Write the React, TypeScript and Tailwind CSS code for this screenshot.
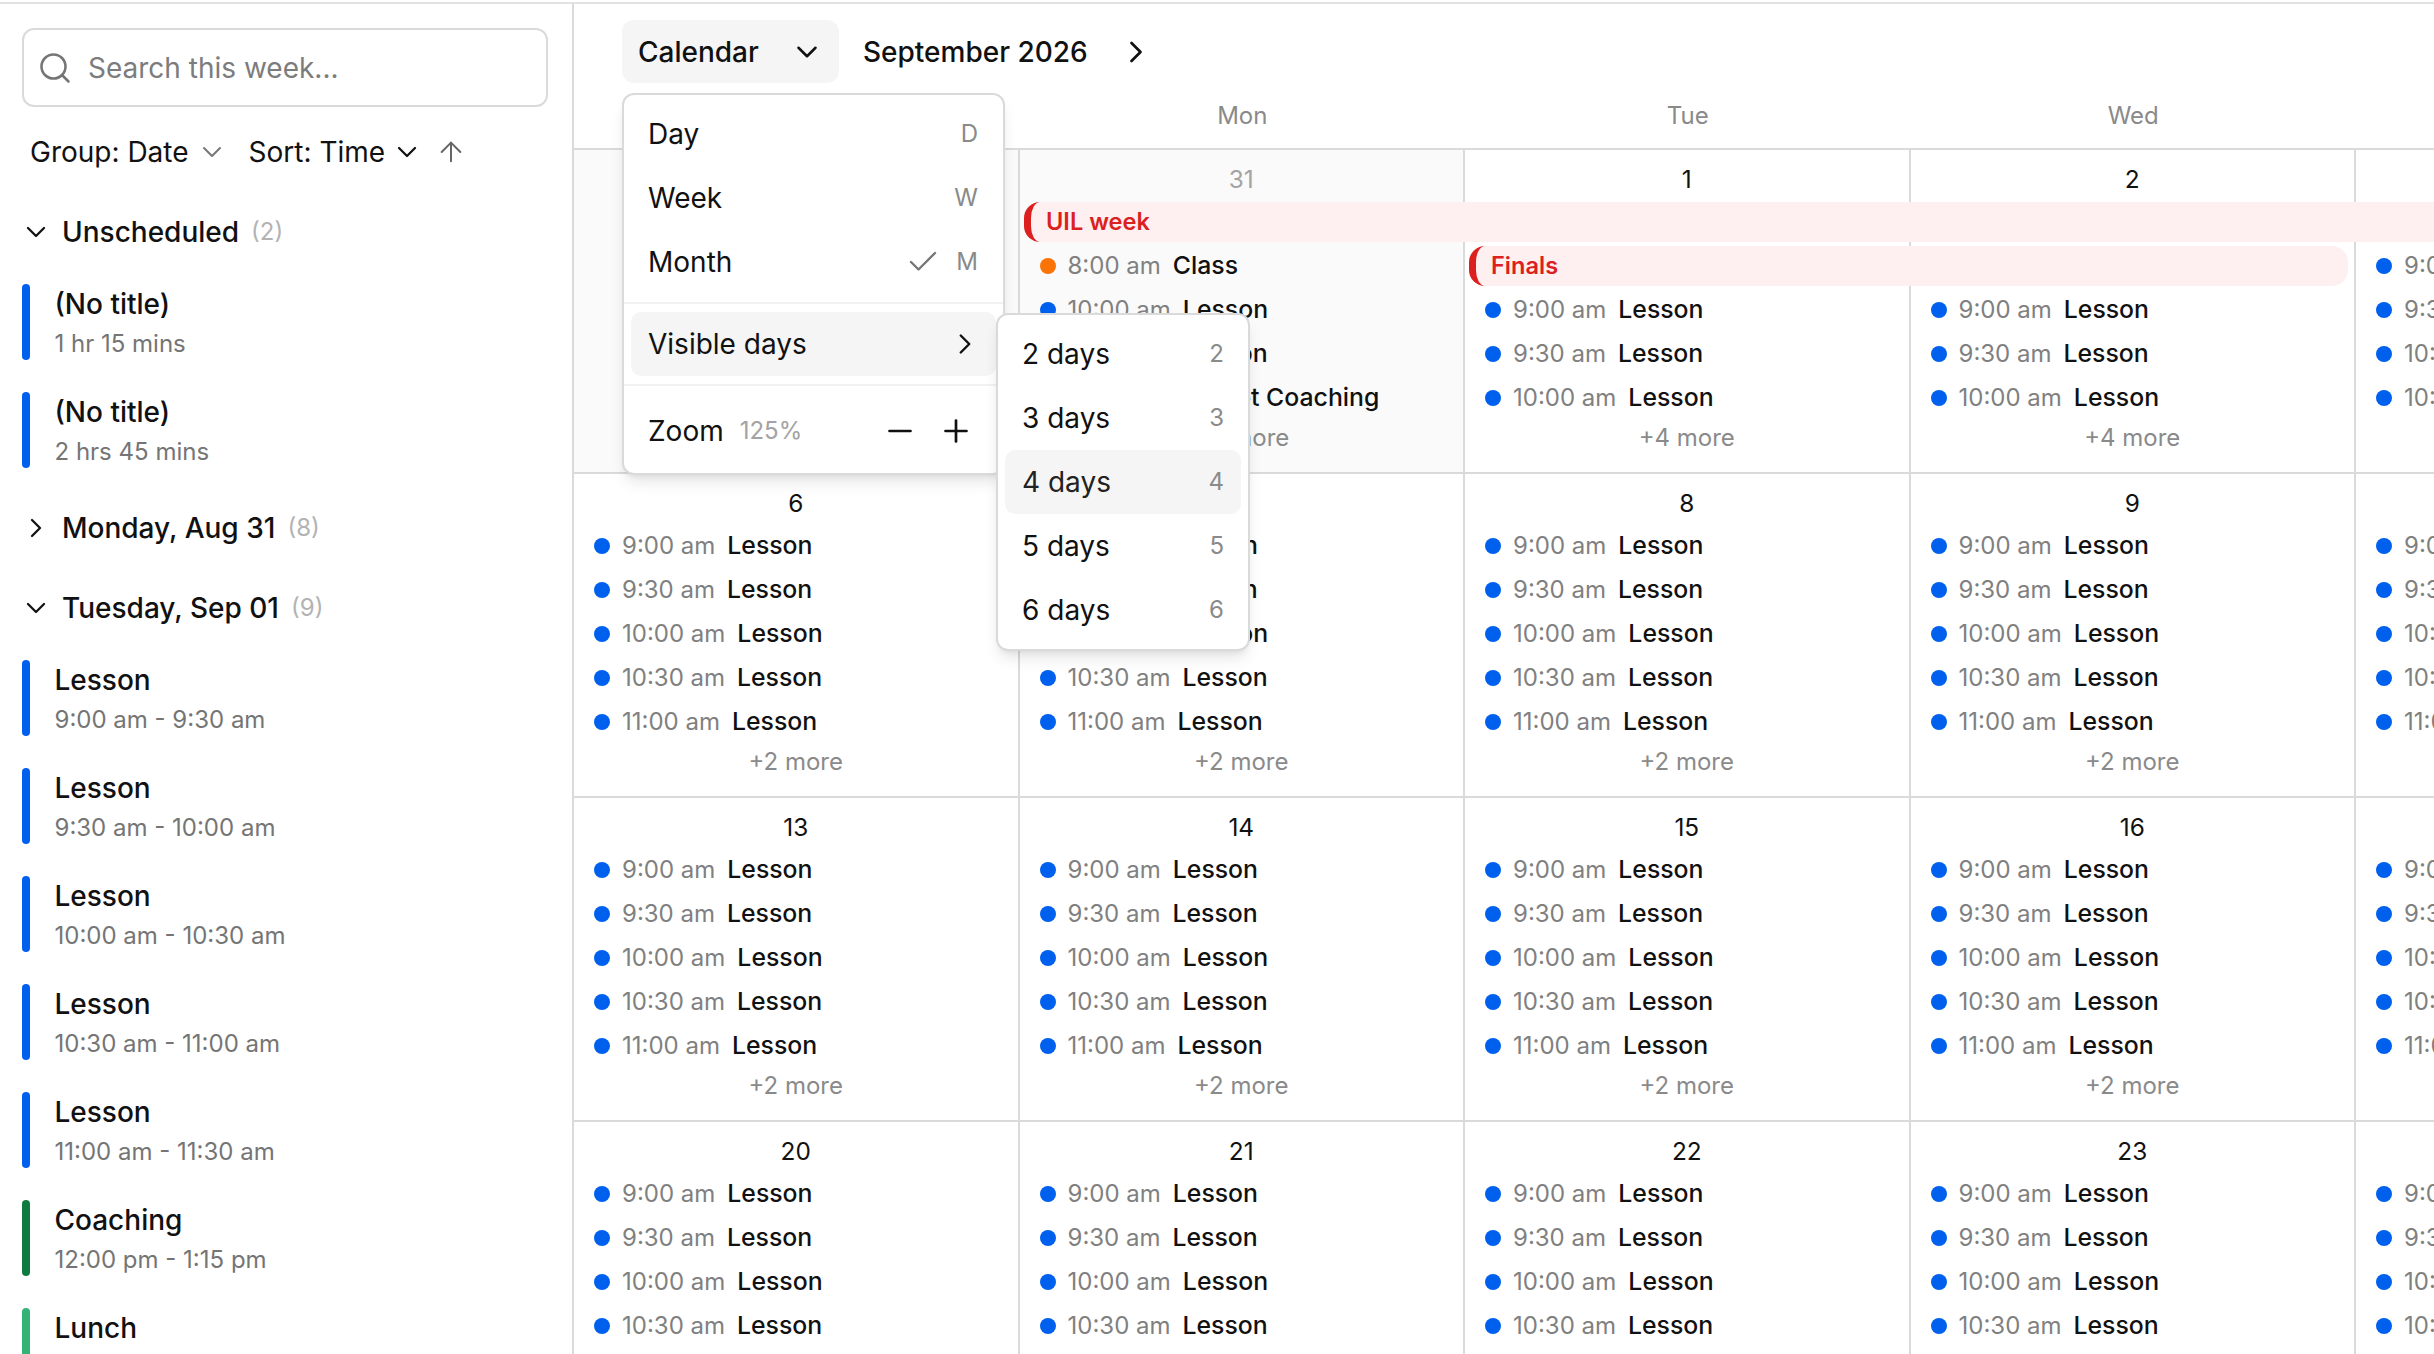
import { ArrowUp, Check, ChevronDown, ChevronRight, Minus, Plus, Search } from 'lucide-react';

type Ev = { time: string; title: string; dot?: string };
type Cell = { date: string; muted?: boolean; shaded?: boolean; top?: number; events: Ev[]; more?: number };

const lessons = (times: string[]): Ev[] => times.map((time) => ({ time, title: 'Lesson' }));
const full = ['9:00 am', '9:30 am', '10:00 am', '10:30 am', '11:00 am'];

const firstRow: Cell[] = [
  { date: '30', muted: true, shaded: true, events: [] },
  {
    date: '31',
    muted: true,
    shaded: true,
    top: 44,
    more: 4,
    events: [
      { time: '8:00 am', title: 'Class', dot: 'bg-[#f97306]' },
      { time: '10:00 am', title: 'Lesson' },
      { time: '10:30 am', title: 'Lesson' },
      { time: '12:00 pm', title: 'Target Coaching', dot: 'bg-[#0f7a3f]' },
    ],
  },
  { date: '1', top: 88, more: 4, events: lessons(['9:00 am', '9:30 am', '10:00 am']) },
  { date: '2', top: 88, more: 4, events: lessons(['9:00 am', '9:30 am', '10:00 am']) },
  { date: '3', top: 44, more: 4, events: lessons(['9:00 am', '9:30 am', '10:00 am', '10:30 am']) },
];

const week = (start: number): Cell[] =>
  [0, 1, 2, 3, 4].map((i) => ({ date: String(start + i), more: 2, events: lessons(full) }));

const rows: Cell[][] = [firstRow, week(6), week(13), week(20)];

const sidebarLessons = [
  { title: 'Lesson', sub: '9:00 am - 9:30 am', bar: 'bg-[#0060ee]' },
  { title: 'Lesson', sub: '9:30 am - 10:00 am', bar: 'bg-[#0060ee]' },
  { title: 'Lesson', sub: '10:00 am - 10:30 am', bar: 'bg-[#0060ee]' },
  { title: 'Lesson', sub: '10:30 am - 11:00 am', bar: 'bg-[#0060ee]' },
  { title: 'Lesson', sub: '11:00 am - 11:30 am', bar: 'bg-[#0060ee]' },
  { title: 'Coaching', sub: '12:00 pm - 1:15 pm', bar: 'bg-[#0f7a3f]' },
  { title: 'Lunch', sub: '1:15 pm - 2:00 pm', bar: 'bg-[#34b377]' },
];

function GroupHeader({ label, count, open = true }: { label: string; count: number; open?: boolean }) {
  return (
    <div className="flex h-10 items-center text-[28px] font-[450] text-[#111]">
      {open ? (
        <ChevronDown size={32} strokeWidth={1.7} className="-ml-[2px] shrink-0" />
      ) : (
        <ChevronRight size={32} strokeWidth={1.7} className="-ml-[2px] shrink-0" />
      )}
      <span className="ml-[10px]">{label}</span>
      <span className="ml-[12px] text-[24px] font-normal text-[#b3b3b3]">({count})</span>
    </div>
  );
}

function SideItem({ title, sub, bar }: { title: string; sub: string; bar: string }) {
  return (
    <div className="flex h-[76px] shrink-0">
      <div className={`h-[76px] w-2 shrink-0 rounded-full ${bar}`} />
      <div className="ml-[24.5px]">
        <div className="flex h-10 items-center text-[28px] font-[450] text-[#111]">{title}</div>
        <div className="mt-[2px] flex h-9 items-center text-[24px] text-[#757575]">{sub}</div>
      </div>
    </div>
  );
}

function Sidebar() {
  return (
    <aside className="h-full w-[574px] shrink-0 overflow-hidden border-r-2 border-[#dadada] px-[22px] pt-6">
      <div className="flex h-[79px] w-[526px] items-center rounded-xl border-2 border-[#dadada] pl-[13px]">
        <Search size={36} strokeWidth={1.7} className="shrink-0 text-[#757575]" />
        <span className="ml-[15px] text-[28px] text-[#7c7c7c]">Search this week...</span>
      </div>
      <div className="mt-[25px] flex h-10 items-center pl-2 text-[28px] text-[#111]">
        <span>Group: Date</span>
        <ChevronDown size={32} strokeWidth={1.5} className="ml-[7px] text-[#777]" />
        <span className="ml-[21px]">Sort: Time</span>
        <ChevronDown size={32} strokeWidth={1.7} className="ml-1.5" />
        <ArrowUp size={32} strokeWidth={1.5} className="ml-3 text-[#666]" />
      </div>
      <div className="mt-10">
        <GroupHeader label="Unscheduled" count={2} />
        <div className="mt-8 flex flex-col gap-8">
          <SideItem title="(No title)" sub="1 hr 15 mins" bar="bg-[#0060ee]" />
          <SideItem title="(No title)" sub="2 hrs 45 mins" bar="bg-[#0060ee]" />
        </div>
      </div>
      <div className="mt-10">
        <GroupHeader label="Monday, Aug 31" count={8} open={false} />
      </div>
      <div className="mt-10">
        <GroupHeader label="Tuesday, Sep 01" count={9} />
        <div className="mt-8 flex flex-col gap-8">
          {sidebarLessons.map((item) => (
            <SideItem key={item.sub} {...item} />
          ))}
        </div>
      </div>
    </aside>
  );
}

function EventRow({ time, title, dot = 'bg-[#0060ee]' }: Ev) {
  return (
    <div className="flex h-11 shrink-0 items-center whitespace-nowrap pl-[20px]">
      <span className={`h-4 w-4 shrink-0 rounded-full ${dot}`} />
      <span className="ml-3 text-[24px] text-[#808080]">{time}</span>
      <span className="ml-3 text-[24.8px] font-[450] text-[#111]">{title}</span>
    </div>
  );
}

function DayCell({ cell }: { cell: Cell }) {
  return (
    <div className={`w-[445.5px] shrink-0 border-r-2 border-[#dadada] ${cell.shaded ? 'bg-[#fafafa]' : 'bg-white'}`}>
      <div className={`flex h-[50px] items-center justify-center pt-2 text-[24.4px] ${cell.muted ? 'text-[#a3a3a3]' : 'text-[#111]'}`}>
        {cell.date}
      </div>
      {cell.top ? <div style={{ height: cell.top }} /> : null}
      {cell.events.map((ev) => (
        <EventRow key={ev.time} {...ev} />
      ))}
      {cell.more ? (
        <div className="-mt-1 flex h-11 items-center justify-center text-[24px] text-[#8a8a8a]">+{cell.more} more</div>
      ) : null}
    </div>
  );
}

function MenuItem({ label, hint, check }: { label: string; hint: string; check?: boolean }) {
  return (
    <div className="flex h-16 items-center justify-between rounded-[10px] pl-[17px] pr-[18px] text-[28px] text-[#111]">
      <span>{label}</span>
      <span className="flex items-center text-[24px] text-[#8a8a8a]">
        {check ? <Check size={36} strokeWidth={1.6} className="mr-[15px] text-[#777]" /> : null}
        {hint}
      </span>
    </div>
  );
}

function ViewMenu() {
  return (
    <div className="absolute left-[48px] top-[89px] z-20 w-[383px] rounded-xl border-2 border-[#dadada] bg-white pt-[7px] shadow-lg">
      <div className="px-[7px]">
        <MenuItem label="Day" hint="D" />
        <MenuItem label="Week" hint="W" />
        <MenuItem label="Month" hint="M" check />
      </div>
      <div className="mt-2 h-0.5 bg-[#f1f1f1]" />
      <div className="mx-[7px] mt-2 flex h-16 items-center justify-between rounded-[10px] bg-[#f5f5f5] pl-[17px] pr-[14px] text-[28px] text-[#111]">
        <span>Visible days</span>
        <ChevronRight size={34} strokeWidth={1.7} />
      </div>
      <div className="mt-2 h-0.5 bg-[#f1f1f1]" />
      <div className="flex h-[87px] items-center pl-6 pt-[2px] text-[28px] text-[#111]">
        <span>Zoom</span>
        <span className="ml-[16px] text-[24px] text-[#a3a3a3]">125%</span>
        <Minus size={36} strokeWidth={1.8} className="ml-[80px]" />
        <Plus size={36} strokeWidth={1.8} className="ml-5" />
      </div>
    </div>
  );
}

function DaysMenu() {
  return (
    <div className="absolute left-[422px] top-[309px] z-30 w-[254px] rounded-xl border-2 border-[#dadada] bg-white px-[7px] py-[7px] shadow-lg">
      {[2, 3, 4, 5, 6].map((n) => (
        <div
          key={n}
          className={`flex h-16 items-center justify-between rounded-[10px] pl-[17px] pr-[17px] text-[28px] ${n === 4 ? 'bg-[#f5f5f5] text-[#222]' : 'text-[#111]'}`}
        >
          <span>{n} days</span>
          <span className="text-[24px] text-[#8a8a8a]">{n}</span>
        </div>
      ))}
    </div>
  );
}

export default function App() {
  return (
    <div className="h-screen w-full overflow-hidden bg-white pt-0.5 font-['Inter',sans-serif]">
      <div className="flex h-full border-t-2 border-[#e2e2e2]">
        <Sidebar />
        <main className="relative h-full min-w-0 flex-1 overflow-hidden">
          <div className="flex h-[79px] items-start pl-12 pt-4">
            <div className="flex h-[63px] w-[217px] items-center justify-between rounded-xl bg-[#f5f5f5] pl-4 pr-[15px] text-[28px] font-[450] text-[#111]">
              <span>Calendar</span>
              <ChevronDown size={34} strokeWidth={1.8} />
            </div>
            <div className="ml-6 flex h-[63px] items-center text-[28px] font-[450] text-[#111]">
              <span>September 2026</span>
              <ChevronRight size={36} strokeWidth={1.8} className="ml-[30px]" />
            </div>
          </div>

          <div className="flex h-[67px] items-center border-b-2 border-[#dadada] text-[24px] text-[#8a8a8a]">
            {['Sun', 'Mon', 'Tue', 'Wed', 'Thu'].map((d) => (
              <div key={d} className="w-[445.5px] shrink-0 text-center">
                {d}
              </div>
            ))}
          </div>

          {rows.map((row, i) => (
            <div key={i} className="relative flex h-[324px] border-b-2 border-[#dadada]">
              {row.map((cell) => (
                <DayCell key={cell.date} cell={cell} />
              ))}
              {i === 0 ? (
                <>
                  <div className="absolute left-[450px] right-0 top-[52px] flex h-10 items-center rounded-l-[16px] border-l-[7px] border-[#dc1f1f] bg-[#fef0f0] pl-[15px] text-[23.6px] font-semibold text-[#dc1f1f]">
                    UIL week
                  </div>
                  <div className="absolute left-[895px] top-[96px] flex h-10 w-[879px] items-center rounded-[16px] border-l-[7px] border-[#dc1f1f] bg-[#fef0f0] pl-[15px] text-[23.6px] font-semibold text-[#dc1f1f]">
                    Finals
                  </div>
                </>
              ) : null}
            </div>
          ))}

          <ViewMenu />
          <DaysMenu />
        </main>
      </div>
    </div>
  );
}
